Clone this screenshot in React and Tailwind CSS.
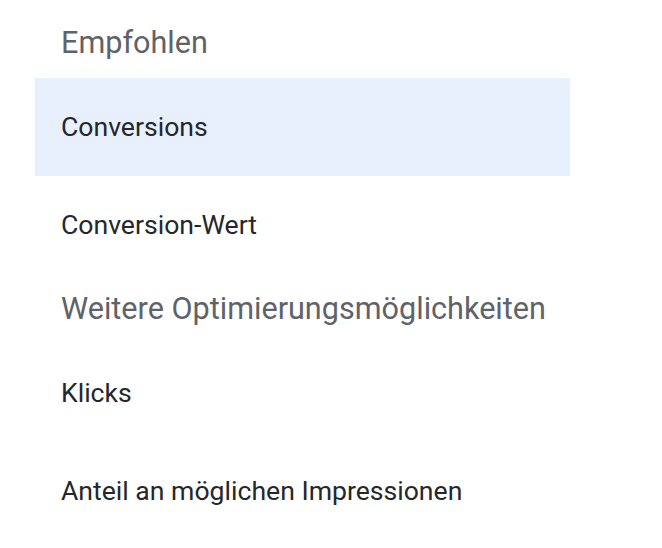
import React from 'react';

const sections = [
  {
    title: 'Empfohlen',
    items: [
      { label: 'Conversions', selected: true },
      { label: 'Conversion-Wert' },
    ],
  },
  {
    title: 'Weitere Optimierungsmöglichkeiten',
    items: [
      { label: 'Klicks' },
      { label: 'Anteil an möglichen Impressionen' },
    ],
  },
];

export default function App() {
  return (
    <div className="min-h-screen bg-white pt-[8px] font-['Roboto',sans-serif]">
      <div className="w-[535px] ml-[35px]">
        {sections.map((section) => (
          <div key={section.title}>
            {/* section header */}
            <div className="h-[70px] flex items-center pl-[26px] text-[30.6px] text-[#5f6368]">
              {section.title}
            </div>
            {section.items.map((item) => (
              <div
                key={item.label}
                className={`h-[98px] flex items-center pl-[26px] text-[26.6px] text-[#26272a] ${
                  item.selected ? 'bg-[#e8f0fe]' : ''
                }`}
              >
                {item.label}
              </div>
            ))}
          </div>
        ))}
      </div>
    </div>
  );
}
